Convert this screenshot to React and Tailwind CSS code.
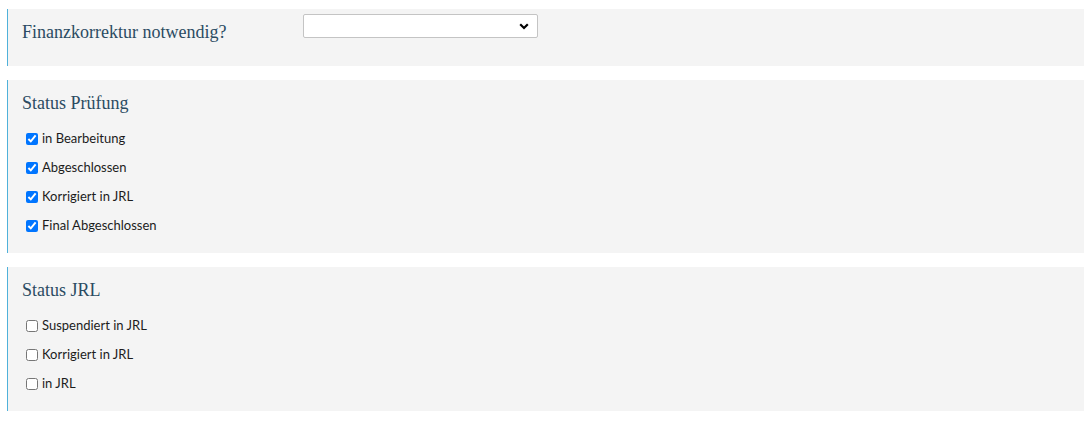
import React from 'react';

const Panel = ({ children, className = '' }) => (
    <div className={`bg-[#f4f4f4] border-l border-[#4fb1da] ml-[7px] pl-[14px] ${className}`}>
        {children}
    </div>
);

const Heading = ({ children }) => (
    <h2 className="pt-[11px] text-[18px] leading-[24px] text-[#2b4b62] font-normal" style={{ fontFamily: '"Liberation Serif", serif' }}>
        {children}
    </h2>
);

const CheckRow = ({ label, checked }) => (
    <label className="flex items-center h-[29px] text-[13px] text-[#1c1c1c]">
        <input
            type="checkbox"
            defaultChecked={checked}
            className="w-[12px] h-[12px] mt-[1px] ml-[4px] mr-[4px] accent-[#0075ff]"
        />
        <span>{label}</span>
    </label>
);

export default function App() {
    const pruefung = ['in Bearbeitung', 'Abgeschlossen', 'Korrigiert in JRL', 'Final Abgeschlossen'];
    const jrl = ['Suspendiert in JRL', 'Korrigiert in JRL', 'in JRL'];

    return (
        <div className="bg-white w-[1084px] h-[428px] pt-[9px]" style={{ fontFamily: 'Lato, sans-serif' }}>
            {/* Finanzkorrektur */}
            <Panel className="h-[57px] flex items-start">
                <div className="w-[281px]">
                    <Heading>Finanzkorrektur notwendig?</Heading>
                </div>
                <div className="mt-[5px] w-[235px] h-[24px] bg-white border border-[#c4c4c4] rounded-[2px] flex items-center justify-end pr-[8px]">
                    <svg width="10" height="7" viewBox="0 0 10 7" fill="none">
                        <path d="M1.2 1.2 L5 5 L8.8 1.2" stroke="#000" strokeWidth="2.2" />
                    </svg>
                </div>
            </Panel>

            {/* Status Prüfung */}
            <Panel className="mt-[14px] pb-[13px]">
                <Heading>Status Prüfung</Heading>
                <div className="mt-[9px]">
                    {pruefung.map((l) => (
                        <CheckRow key={l} label={l} checked />
                    ))}
                </div>
            </Panel>

            {/* Status JRL */}
            <Panel className="mt-[14px] pb-[13px]">
                <Heading>Status JRL</Heading>
                <div className="mt-[9px]">
                    {jrl.map((l) => (
                        <CheckRow key={l} label={l} checked={false} />
                    ))}
                </div>
            </Panel>
        </div>
    );
}
